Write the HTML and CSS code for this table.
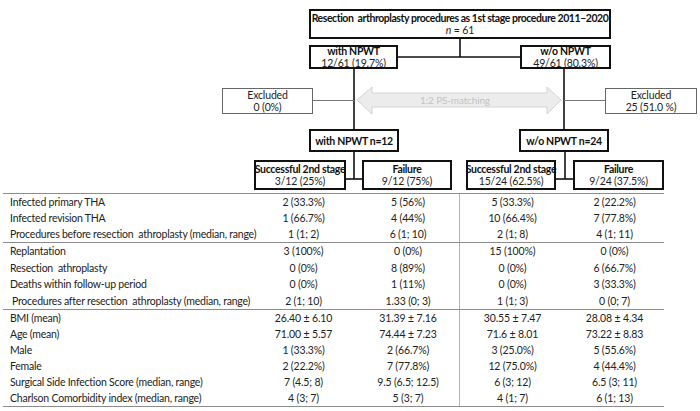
FILE: index.html
```html
<!DOCTYPE html>
<html>
<head>
<meta charset="utf-8">
<link rel="stylesheet" href="styles.css">
</head>
<body>
<div class="page">
  <div class="diagram">
    <svg class="links" width="700" height="193" viewBox="0 0 700 193">
      <g stroke="#111" stroke-width="1.6" fill="none">
        <line x1="460" y1="39" x2="460" y2="57"/>
        <line x1="398" y1="57" x2="520" y2="57"/>
        <line x1="354" y1="69" x2="354" y2="129"/>
        <line x1="564" y1="69" x2="564" y2="129"/>
        <line x1="354" y1="152" x2="354" y2="179"/>
        <line x1="346" y1="179" x2="362" y2="179"/>
        <line x1="565" y1="152" x2="565" y2="179"/>
        <line x1="556" y1="179" x2="573" y2="179"/>
      </g>
      <g stroke="#777" stroke-width="1" fill="none">
        <line x1="313" y1="100.5" x2="354" y2="100.5"/>
        <line x1="564" y1="100.5" x2="605" y2="100.5"/>
      </g>
      <polygon points="357,100 372,87 372,93 547,93 547,87 561,100 547,114 547,107 372,107 372,114" fill="#ececec" stroke="#d4d4d4" stroke-width="1"/>
    </svg>
    <div class="box b-top">
      <div class="bold title">Resection&nbsp; arthroplasty procedures as 1st stage procedure 2011–2020</div>
      <div><i>n</i> = 61</div>
    </div>
    <div class="box b-with">
      <div class="bold">with NPWT</div>
      <div>12/61 (19.7%)</div>
    </div>
    <div class="box b-wo">
      <div class="bold">w/o NPWT</div>
      <div>49/61 (80.3%)</div>
    </div>
    <div class="box thin b-exl">
      <div>Excluded</div>
      <div>0 (0%)</div>
    </div>
    <div class="box thin b-exr">
      <div>Excluded</div>
      <div>25 (51.0 %)</div>
    </div>
    <div class="match">1:2 PS-matching</div>
    <div class="box b-with12"><div class="bold">with NPWT n=12</div></div>
    <div class="box b-wo24"><div class="bold">w/o NPWT n=24</div></div>
    <div class="box b-sl">
      <div class="bold">Successful 2nd stage</div>
      <div>3/12 (25%)</div>
    </div>
    <div class="box b-fl">
      <div class="bold">Failure</div>
      <div>9/12 (75%)</div>
    </div>
    <div class="box b-sr">
      <div class="bold">Successful 2nd stage</div>
      <div>15/24 (62.5%)</div>
    </div>
    <div class="box b-fr">
      <div class="bold">Failure</div>
      <div>9/24 (37.5%)</div>
    </div>
  </div>

  <div class="table">
    <div class="section s1">
      <div class="lab">Infected primary THA</div><div>2 (33.3%)</div><div>5 (56%)</div><div class="c3">5 (33.3%)</div><div>2 (22.2%)</div>
      <div class="lab">Infected revision THA</div><div>1 (66.7%)</div><div>4 (44%)</div><div class="c3">10 (66.4%)</div><div>7 (77.8%)</div>
      <div class="lab">Procedures before resection&nbsp; athroplasty (median, range)</div><div>1 (1; 2)</div><div>6 (1; 10)</div><div class="c3">2 (1; 8)</div><div>4 (1; 11)</div>
    </div>
    <div class="section s2">
      <div class="lab">Replantation</div><div>3 (100%)</div><div>0 (0%)</div><div class="c3">15 (100%)</div><div>0 (0%)</div>
      <div class="lab">Resection&nbsp; athroplasty</div><div>0 (0%)</div><div>8 (89%)</div><div class="c3">0 (0%)</div><div>6 (66.7%)</div>
      <div class="lab">Deaths within follow-up period</div><div>0 (0%)</div><div>1 (11%)</div><div class="c3">0 (0%)</div><div>3 (33.3%)</div>
      <div class="lab indent">Procedures after resection&nbsp; athroplasty (median, range)</div><div>2 (1; 10)</div><div>1.33 (0; 3)</div><div class="c3">1 (1; 3)</div><div>0 (0; 7)</div>
    </div>
    <div class="section s3">
      <div class="lab">BMI (mean)</div><div>26.40 ± 6.10</div><div>31.39 ± 7.16</div><div class="c3">30.55 ± 7.47</div><div>28.08 ± 4.34</div>
      <div class="lab">Age (mean)</div><div>71.00 ± 5.57</div><div>74.44 ± 7.23</div><div class="c3">71.6 ± 8.01</div><div>73.22 ± 8.83</div>
      <div class="lab">Male</div><div>1 (33.3%)</div><div>2 (66.7%)</div><div class="c3">3 (25.0%)</div><div>5 (55.6%)</div>
      <div class="lab">Female</div><div>2 (22.2%)</div><div>7 (77.8%)</div><div class="c3">12 (75.0%)</div><div>4 (44.4%)</div>
      <div class="lab">Surgical Side Infection Score (median, range)</div><div>7 (4.5; 8)</div><div>9.5 (6.5; 12.5)</div><div class="c3">6 (3; 12)</div><div>6.5 (3; 11)</div>
      <div class="lab">Charlson Comorbidity index (median, range)</div><div>4 (3; 7)</div><div>5 (3; 7)</div><div class="c3">4 (1; 7)</div><div>6 (1; 13)</div>
    </div>
  </div>
</div>
</body>
</html>
```

FILE: styles.css
```css
html, body {
  margin: 0;
  padding: 0;
  background: #fff;
}
body {
  font-family: Lato, "Liberation Sans", sans-serif;
  font-size: 10.5px;
  letter-spacing: -0.15px;
  color: #222;
}
.page {
  width: 700px;
  height: 411px;
  overflow: hidden;
}
.diagram {
  position: relative;
  height: 193px;
}
.links {
  position: absolute;
  left: 0;
  top: 0;
}
.box {
  position: absolute;
  box-sizing: border-box;
  background: #fff;
  border: 2px solid #111;
  display: flex;
  flex-direction: column;
  justify-content: center;
  align-items: center;
  text-align: center;
  line-height: 12px;
  white-space: nowrap;
}
.box.thin {
  border: 1px solid #666;
}
.bold {
  font-weight: bold;
  letter-spacing: -0.3px;
  color: #111;
}
.bold.title {
  letter-spacing: -0.45px;
}
.b-top { left: 309px; top: 9px; width: 302px; height: 30px; }
.b-with { left: 309px; top: 45px; width: 89px; height: 24px; }
.b-wo { left: 520px; top: 45px; width: 91px; height: 24px; }
.b-exl { left: 222px; top: 88px; width: 91px; height: 26px; }
.b-exr { left: 605px; top: 88px; width: 92px; height: 26px; }
.b-with12 { left: 309px; top: 129px; width: 90px; height: 23px; }
.b-wo24 { left: 519px; top: 129px; width: 90px; height: 23px; }
.b-sl { left: 254px; top: 160px; width: 92px; height: 30px; }
.b-fl { left: 362px; top: 160px; width: 90px; height: 30px; }
.b-sr { left: 466px; top: 160px; width: 90px; height: 30px; }
.b-fr { left: 573px; top: 160px; width: 91px; height: 30px; }
.match {
  position: absolute;
  left: 372px;
  top: 93px;
  width: 166px;
  height: 14px;
  line-height: 14px;
  text-align: center;
  color: #c4c4c4;
  font-size: 10px;
}
.table {
  margin-left: 3px;
  width: 661px;
  border-top: 1px solid #8c8c8c;
  border-bottom: 1px solid #8c8c8c;
}
.section {
  display: grid;
  grid-template-columns: 247px 107px 102px 106px 99px;
  text-align: center;
  white-space: nowrap;
}
.section > div {
  height: 16px;
  line-height: 16px;
}
.s1, .s2 {
  border-bottom: 1px solid #8c8c8c;
}
.s2 > div {
  height: 16.5px;
  line-height: 16.5px;
}
.lab {
  text-align: left;
  padding-left: 7px;
  letter-spacing: -0.22px;
}
.lab.indent {
  padding-left: 9px;
}
.c3 {
  border-left: 1px solid #b4b4b4;
}
```
